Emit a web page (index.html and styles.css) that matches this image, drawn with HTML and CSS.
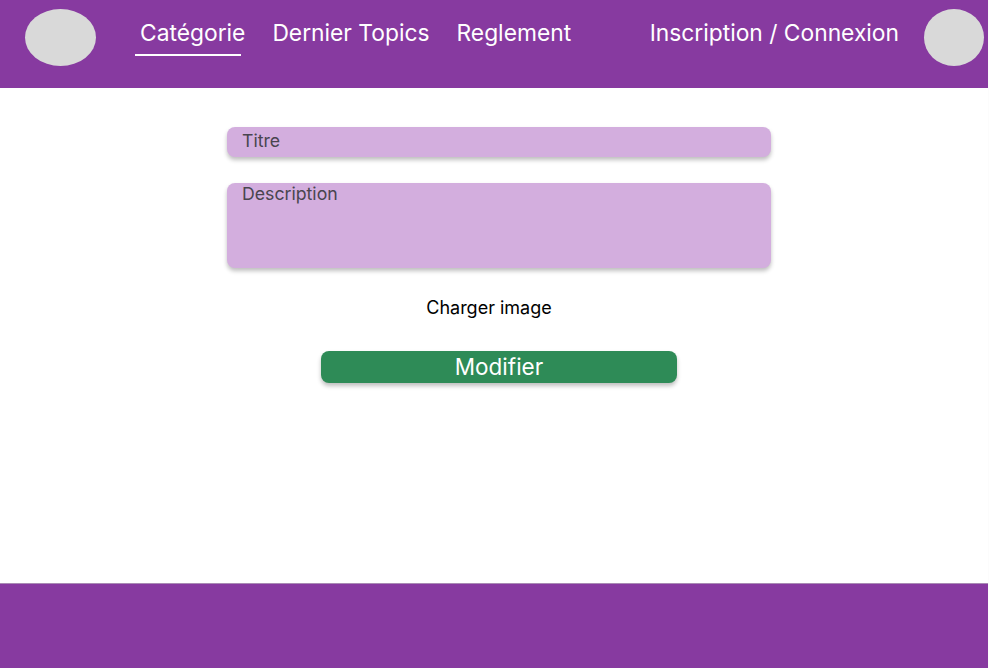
FILE: index.html
```html
<!DOCTYPE html>
<html lang="fr">
<head>
<meta charset="utf-8">
<title>Modifier</title>
<link rel="stylesheet" href="styles.css">
</head>
<body>
<div class="page">
  <header class="header">
    <div class="logo"></div>
    <nav class="nav">
      <a class="nav-link active">Catégorie</a>
      <a class="nav-link">Dernier Topics</a>
      <a class="nav-link">Reglement</a>
    </nav>
    <a class="nav-link auth">Inscription / Connexion</a>
    <div class="avatar"></div>
  </header>
  <main class="main">
    <div class="field field-title">Titre</div>
    <div class="field field-desc">Description</div>
    <div class="upload">Charger image</div>
    <button class="btn">Modifier</button>
  </main>
  <footer class="footer"></footer>
</div>
</body>
</html>
```
FILE: styles.css
```css
html, body {
  margin: 0;
  padding: 0;
  background: #fcfcfc;
}
.page {
  width: 988px;
  height: 668px;
  display: flex;
  flex-direction: column;
  background: #ffffff;
  font-family: Inter, "Noto Sans", sans-serif;
}
.header {
  height: 88px;
  flex: none;
  background: #873aa0;
  display: flex;
  align-items: flex-start;
  box-sizing: border-box;
  padding: 9px 4px 0 25px;
}
.logo {
  width: 71px;
  height: 57px;
  border-radius: 50%;
  background: #d9d9d9;
}
.nav {
  display: flex;
  margin-left: 44px;
}
.nav-link {
  color: #ffffff;
  font-size: 22.8px;
  line-height: 28px;
  padding: 10px 0 0;
  margin-right: 27px;
  position: relative;
  white-space: nowrap;
}
.nav-link.active::after {
  content: "";
  position: absolute;
  left: -5px;
  right: 4px;
  top: 45px;
  height: 2px;
  background: #ffffff;
}
.auth {
  margin-left: auto;
  margin-right: 25px;
}
.avatar {
  width: 60px;
  height: 57px;
  border-radius: 50%;
  background: #d9d9d9;
}
.main {
  flex: 1;
  display: flex;
  flex-direction: column;
  align-items: center;
  padding-top: 39px;
}
.field {
  width: 544px;
  box-sizing: border-box;
  background: #d3aede;
  border-radius: 8px;
  box-shadow: 0 3px 4px rgba(0, 0, 0, 0.25);
  color: #49454f;
  font-size: 17.7px;
  line-height: 24px;
  padding: 2px 15px 0;
  margin-left: 10px;
}
.field-title {
  height: 30px;
}
.field-desc {
  height: 85px;
  margin-top: 26px;
  padding-top: 0;
  line-height: 22px;
}
.upload {
  margin-top: 28px;
  font-size: 18px;
  line-height: 24px;
  color: #000000;
  margin-left: -10px;
}
.btn {
  margin-top: 31px;
  width: 356px;
  height: 32px;
  border: none;
  border-radius: 8px;
  background: #2e8b57;
  color: #ffffff;
  font-family: Inter, "Noto Sans", sans-serif;
  font-size: 22.5px;
  line-height: 32px;
  padding: 0;
  box-shadow: 0 3px 4px rgba(0, 0, 0, 0.25);
  margin-left: 10px;
}
.footer {
  height: 84px;
  flex: none;
  background: #873aa0;
  border-top: 1px solid #a98ab4;
}
```
